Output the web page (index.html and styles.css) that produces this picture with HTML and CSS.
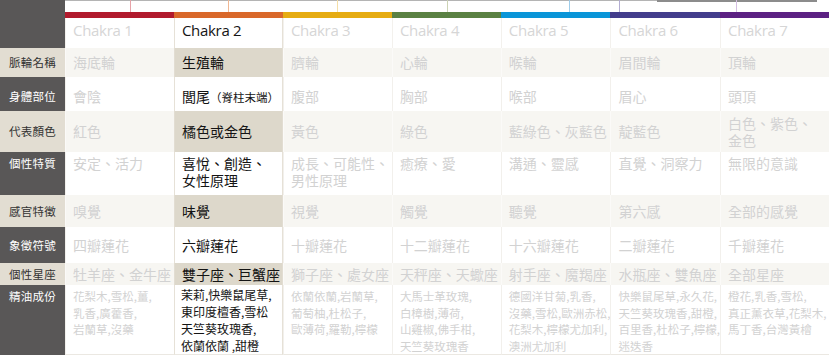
FILE: index.html
```html
<!DOCTYPE html>
<html lang="zh-Hant">
<head>
<meta charset="utf-8">
<title>Chakra</title>
<link rel="stylesheet" href="styles.css">
</head>
<body>
<div class="table">
  <div class="corner"></div>
  <div class="strip">
    <svg width="764" height="12" viewBox="0 0 764 12">
      <rect x="0" y="0" width="752" height="1" fill="#b4b4b4"/>
      <rect x="592" y="0" width="160" height="2" fill="#8c8c8c"/>
      <rect x="65" y="0" width="1" height="12" fill="#e7a3a8"/>
      <rect x="163" y="0" width="1" height="12" fill="#f0b894"/>
      <rect x="272" y="0" width="1" height="12" fill="#f5dfa8"/>
      <rect x="382" y="0" width="1" height="12" fill="#cdd3b5"/>
      <rect x="504" y="0" width="1" height="12" fill="#9fcdea"/>
      <rect x="554" y="0" width="1" height="12" fill="#b3add2"/>
      <rect x="671" y="0" width="1" height="12" fill="#d4bfe2"/>
    </svg>
  </div>

  <div class="bar b1"></div>
  <div class="bar b2"></div>
  <div class="bar b3"></div>
  <div class="bar b4"></div>
  <div class="bar b5"></div>
  <div class="bar b6"></div>
  <div class="bar b7"></div>

  <div class="th">Chakra 1</div>
  <div class="th on">Chakra 2</div>
  <div class="th">Chakra 3</div>
  <div class="th">Chakra 4</div>
  <div class="th">Chakra 5</div>
  <div class="th">Chakra 6</div>
  <div class="th">Chakra 7</div>

  <div class="row g">
    <div class="lab">脈輪名稱</div>
    <div class="td">海底輪</div>
    <div class="td on">生殖輪</div>
    <div class="td">臍輪</div>
    <div class="td">心輪</div>
    <div class="td">喉輪</div>
    <div class="td">眉間輪</div>
    <div class="td">頂輪</div>
  </div>

  <div class="row w low">
    <div class="lab">身體部位</div>
    <div class="td">會陰</div>
    <div class="td on"><span class="nw">閭尾<span class="small">（脊柱末端）</span></span></div>
    <div class="td">腹部</div>
    <div class="td">胸部</div>
    <div class="td">喉部</div>
    <div class="td">眉心</div>
    <div class="td">頭頂</div>
  </div>

  <div class="row g">
    <div class="lab">代表顏色</div>
    <div class="td">紅色</div>
    <div class="td on">橘色或金色</div>
    <div class="td">黃色</div>
    <div class="td">綠色</div>
    <div class="td">藍綠色、灰藍色</div>
    <div class="td">靛藍色</div>
    <div class="td">白色、紫色、<br>金色</div>
  </div>

  <div class="row w top">
    <div class="lab">個性特質</div>
    <div class="td">安定、活力</div>
    <div class="td on">喜悅、創造、<br>女性原理</div>
    <div class="td">成長、可能性、<br>男性原理</div>
    <div class="td">癒療、愛</div>
    <div class="td">溝通、靈感</div>
    <div class="td">直覺、洞察力</div>
    <div class="td">無限的意識</div>
  </div>

  <div class="row g">
    <div class="lab">感官特徵</div>
    <div class="td">嗅覺</div>
    <div class="td on">味覺</div>
    <div class="td">視覺</div>
    <div class="td">觸覺</div>
    <div class="td">聽覺</div>
    <div class="td">第六感</div>
    <div class="td">全部的感覺</div>
  </div>

  <div class="row w">
    <div class="lab">象徵符號</div>
    <div class="td">四瓣蓮花</div>
    <div class="td on">六瓣蓮花</div>
    <div class="td">十瓣蓮花</div>
    <div class="td">十二瓣蓮花</div>
    <div class="td">十六瓣蓮花</div>
    <div class="td">二瓣蓮花</div>
    <div class="td">千瓣蓮花</div>
  </div>

  <div class="row g">
    <div class="lab">個性星座</div>
    <div class="td">牡羊座、金牛座</div>
    <div class="td on">雙子座、巨蟹座</div>
    <div class="td">獅子座、處女座</div>
    <div class="td">天秤座、天蠍座</div>
    <div class="td">射手座、魔羯座</div>
    <div class="td">水瓶座、雙魚座</div>
    <div class="td">全部星座</div>
  </div>

  <div class="row w top oil">
    <div class="lab">精油成份</div>
    <div class="td">花梨木,雪松,薑,<br>乳香,廣藿香,<br>岩蘭草,沒藥</div>
    <div class="td on">茉莉,快樂鼠尾草,<br>東印度檀香,雪松<br>天竺葵玫瑰香,<br>依蘭依蘭 ,甜橙</div>
    <div class="td">依蘭依蘭,岩蘭草,<br>葡萄柚,杜松子,<br>歐薄荷,羅勒,檸檬</div>
    <div class="td">大馬士革玫瑰,<br>白樟樹,薄荷,<br>山雞椒,佛手柑,<br>天竺葵玫瑰香</div>
    <div class="td">德國洋甘菊,乳香,<br>沒藥,雪松,歐洲赤松,<br>花梨木,檸檬尤加利,<br>澳洲尤加利</div>
    <div class="td">快樂鼠尾草,永久花,<br>天竺葵玫瑰香,甜橙,<br>百里香,杜松子,檸檬,<br>迷迭香</div>
    <div class="td">橙花,乳香,雪松,<br>真正薰衣草,花梨木,<br>馬丁香,台灣黃檜</div>
  </div>
</div>
</body>
</html>
```

FILE: styles.css
```css
* {
  box-sizing: border-box;
}

html, body {
  margin: 0;
  padding: 0;
  background: #ffffff;
}

body {
  font-family: "Noto Sans CJK TC", "Noto Sans", sans-serif;
  width: 830px;
  height: 355px;
  overflow: hidden;
}

.table {
  display: grid;
  width: 829px;
  grid-template-columns: 65px repeat(7, 1fr);
  grid-template-rows: 12px 6px 30px 29px 34px 41px 43px 32px 36px 22px 70px;
}

.corner {
  grid-column: 1;
  grid-row: 1 / 4;
  background: #595757;
}

.strip {
  grid-column: 2 / -1;
  grid-row: 1;
  line-height: 0;
}

.strip svg {
  display: block;
}

.bar { grid-row: 2; }
.b1 { background: #b11a2d; }
.b2 { background: #d9682a; }
.b3 { background: #e6ac12; }
.b4 { background: #5a8143; }
.b5 { background: #0a95d8; }
.b6 { background: #433d8c; }
.b7 { background: #5c2183; }

.th {
  grid-row: 3;
  display: flex;
  align-items: center;
  padding: 0 0 6px 7px;
  font-family: "Open Sans", "Noto Sans", sans-serif;
  font-size: 15px;
  letter-spacing: -0.3px;
  color: #d6d6d6;
  border-left: 1px solid #f3f1ed;
}

.th.on {
  color: #151515;
  border-left: 1px solid #e6e1d7;
  border-right: 1px solid #e6e1d7;
}

.row {
  display: contents;
}

.lab {
  display: flex;
  align-items: center;
  justify-content: center;
  font-size: 11.5px;
  line-height: 17px;
  letter-spacing: 0.3px;
}

.g > .lab {
  background: #e2ddd2;
  color: #333333;
}

.w > .lab {
  background: #595757;
  color: #ffffff;
}

.td {
  display: flex;
  align-items: center;
  padding-left: 7px;
  font-size: 14px;
  line-height: 17px;
  color: #d2d2d2;
  border-left: 1px solid #f2f0ec;
}

.g > .td {
  background: #f7f6f2;
  border-left-color: #fbfaf8;
}

.td.on {
  color: #141414;
  border-left: 1px solid #e6e1d7;
  border-right: 1px solid #e6e1d7;
}

.g > .td.on {
  background: #ddd8cb;
  border-left-color: #e2ddd2;
  border-right-color: #e2ddd2;
}

.low > .td,
.low > .lab {
  padding-top: 5px;
}

.nw {
  white-space: nowrap;
}

.small {
  font-size: 11.5px;
}

.top > .td,
.top > .lab {
  align-items: flex-start;
  padding-top: 3px;
}

.oil > .td {
  font-size: 11.5px;
  line-height: 16.5px;
  white-space: nowrap;
  border-bottom: 1px solid #ebe8e2;
}

.oil > .td.on {
  font-size: 12px;
  line-height: 17px;
  padding-top: 1px;
  padding-left: 6px;
}
```
